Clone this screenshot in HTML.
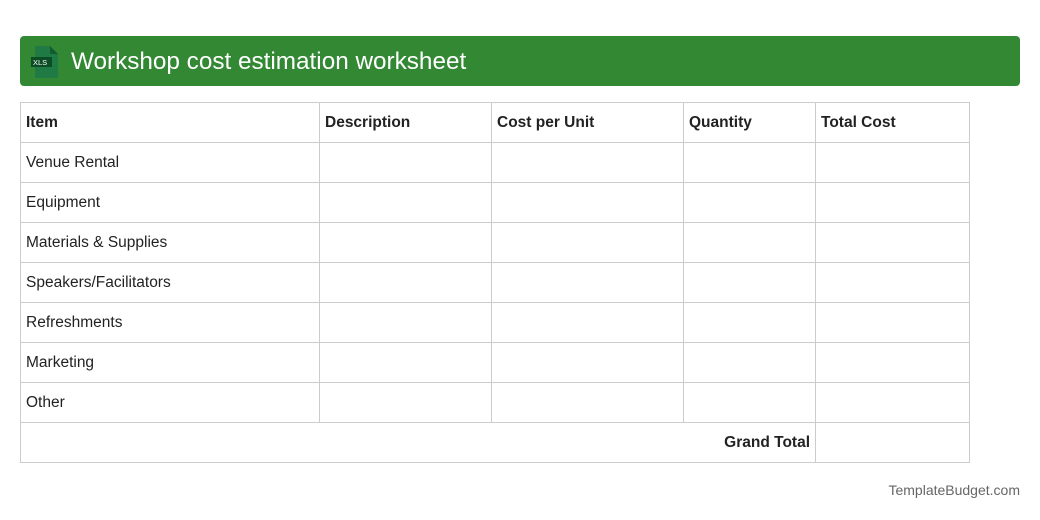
<!DOCTYPE html>
<html><head><meta charset="utf-8"><style>
body{margin:0;width:1040px;height:520px;background:#fff;font-family:"Liberation Sans",sans-serif;position:relative;overflow:hidden}
.hdr{position:absolute;left:20px;top:36px;width:1000px;height:50px;background:#328833;border-radius:4px}
.hdr .t{position:absolute;left:51px;top:12px;color:#fff;font-size:24.3px;line-height:28px}
.icon{position:absolute;left:11px;top:10px}
table{position:absolute;left:20px;top:102px;border-collapse:collapse;width:949px;table-layout:fixed}
td{border:1px solid #ccc;height:40px;padding:0 5px;font-size:15.5px;color:#222;box-sizing:border-box}
tr.h td{font-weight:bold}
.foot{position:absolute;right:20px;top:482px;font-size:14px;color:#666}
</style></head><body>
<div class="hdr">
<svg class="icon" width="30" height="32" viewBox="0 0 30 32"><path d="M5 0h14l8 8v23a1 1 0 0 1-1 1H5a1 1 0 0 1-1-1V1a1 1 0 0 1 1-1z" fill="#1f7a43"/><path d="M19 0l8 8h-8z" fill="#145c30"/><rect x="0" y="11" width="21" height="10" fill="#0d4d26"/><text x="2" y="19" font-size="7.5" fill="#fff" font-family="Liberation Sans">XLS</text></svg>
<div class="t">Workshop cost estimation worksheet</div></div>
<table>
<colgroup><col style="width:299px"><col style="width:172px"><col style="width:192px"><col style="width:132px"><col style="width:154px"></colgroup>
<tr class="h"><td>Item</td><td>Description</td><td>Cost per Unit</td><td>Quantity</td><td>Total Cost</td></tr>
<tr><td>Venue Rental</td><td></td><td></td><td></td><td></td></tr>
<tr><td>Equipment</td><td></td><td></td><td></td><td></td></tr>
<tr><td>Materials &amp; Supplies</td><td></td><td></td><td></td><td></td></tr>
<tr><td>Speakers/Facilitators</td><td></td><td></td><td></td><td></td></tr>
<tr><td>Refreshments</td><td></td><td></td><td></td><td></td></tr>
<tr><td>Marketing</td><td></td><td></td><td></td><td></td></tr>
<tr><td>Other</td><td></td><td></td><td></td><td></td></tr>
<tr><td colspan="4" style="text-align:right;font-weight:bold;padding-right:5px">Grand Total</td><td></td></tr>
</table>
<div class="foot">TemplateBudget.com</div>
</body></html>
